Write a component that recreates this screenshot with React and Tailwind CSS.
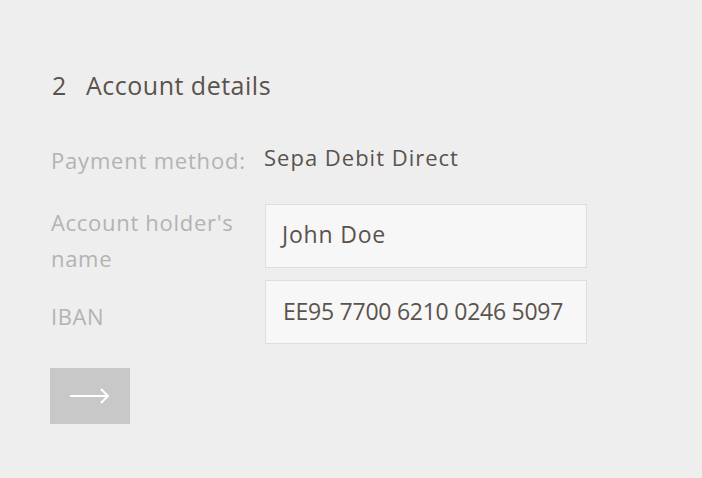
export default function App() {
  const font = { fontFamily: '"Open Sans", sans-serif' };
  return (
    <div className="w-[702px] h-[478px] bg-[#eeeeee] pt-[68px] pl-[51px]" style={font}>
      <div className="flex items-center h-[36px] text-[25px] tracking-[0.5px] text-[#5a534d]">
        <span className="w-[35px] pl-[1px]">2</span>
        <span>Account details</span>
      </div>
      <div className="mt-[41px] flex items-center h-[30px]">
        <div className="w-[213px] text-[22px] tracking-[0.8px] text-[#b3b3b3]">Payment method:</div>
        <div className="text-[22px] tracking-[1px] text-[#5a534d] -mt-[5px]">Sepa Debit Direct</div>
      </div>
      <div className="mt-[29px] flex">
        <div className="w-[214px] h-[64px] text-[22px] tracking-[0.7px] leading-[36px] text-[#b3b3b3] whitespace-nowrap">Account holder's<br />name</div>
        <div className="w-[322px] h-[64px] bg-[#f7f7f7] border border-[#dddddd] flex items-center px-[16px] pb-[4px] text-[23px] tracking-[0.8px] text-[#5a534d]">John Doe</div>
      </div>
      <div className="mt-[12px] flex">
        <div className="w-[214px] h-[64px] pt-[8px] flex items-center text-[22px] tracking-[0.6px] text-[#b3b3b3]">IBAN</div>
        <div className="w-[322px] h-[64px] bg-[#f7f7f7] border border-[#dddddd] flex items-center px-[17px] pb-[2px] text-[23px] tracking-[-0.25px] text-[#5a534d] whitespace-nowrap">EE95 7700 6210 0246 5097</div>
      </div>
      <button className="mt-[24px] -ml-[1px] w-[80px] h-[56px] bg-[#c8c8c8] flex items-center justify-center">
        <svg width="40" height="16" viewBox="0 0 40 16" fill="none" stroke="white" strokeWidth="2">
          <path d="M0 8h38" />
          <path d="M31 1l7 7-7 7" />
        </svg>
      </button>
    </div>
  );
}
